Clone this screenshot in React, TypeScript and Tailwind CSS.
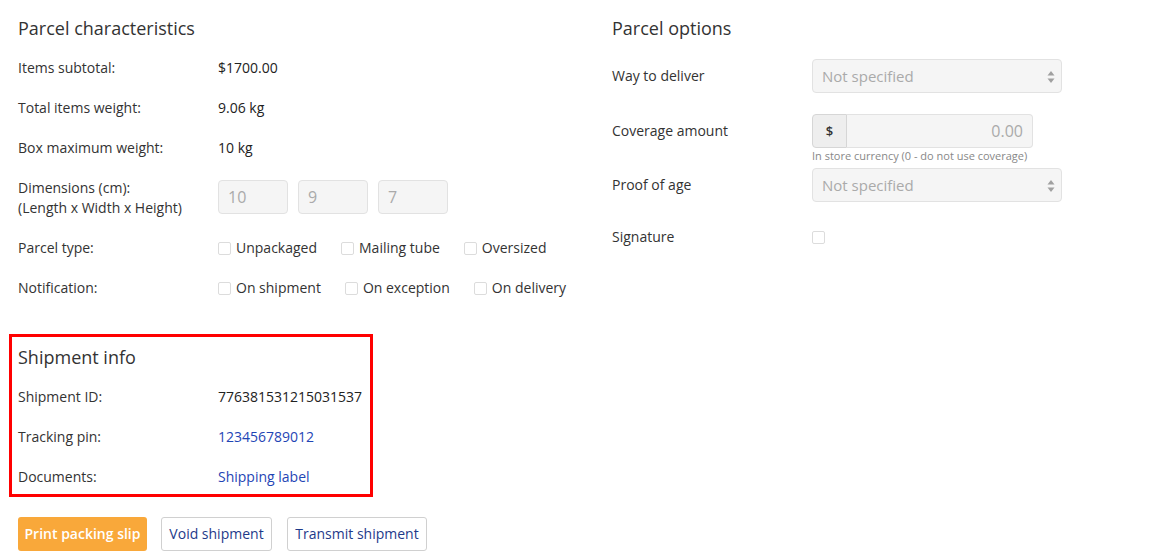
import React from "react";

const Check = ({ label }: { label?: string }) => (
  <label className="flex items-center gap-[5px] whitespace-nowrap">
    <span className="inline-block w-[13px] h-[13px] border border-[#dcdcdc] rounded-[2px] bg-white" />
    {label && <span>{label}</span>}
  </label>
);

const Row = ({ label, children }: { label: string; children: React.ReactNode }) => (
  <div className="flex items-center h-10">
    <div className="w-[200px] shrink-0">{label}</div>
    <div className="text-[#222]">{children}</div>
  </div>
);

const Select = () => (
  <div className="relative w-[250px] h-[34px] bg-[#f5f5f5] border border-[#e2e2e2] rounded-[4px] flex items-center pl-[9px] text-[15px] text-[#aaa]">
    Not specified
    <svg className="absolute right-[6px] top-[11px]" width="8" height="12" viewBox="0 0 8 12">
      <path d="M4 0 L7.5 4.5 H0.5 Z" fill="#a0a0a0" />
      <path d="M4 12 L7.5 7.5 H0.5 Z" fill="#a0a0a0" />
    </svg>
  </div>
);

export default function App() {
  return (
    <div
      className="w-[1150px] h-[557px] bg-white text-[#333] text-[14px] leading-5 overflow-hidden"
      style={{ fontFamily: '"Open Sans", "Liberation Sans", sans-serif' }}
    >
      <div className="flex px-[18px]">
        <div className="w-[594px] shrink-0">
          <h2 className="text-[18px] leading-6 mt-4 mb-2 text-[#333]">Parcel characteristics</h2>
          <Row label="Items subtotal:">$1700.00</Row>
          <Row label="Total items weight:">9.06 kg</Row>
          <Row label="Box maximum weight:">10 kg</Row>
          <div className="flex items-center h-[60px]">
            <div className="w-[200px] shrink-0 leading-5">
              Dimensions (cm):
              <br />
              (Length x Width x Height)
            </div>
            <div className="flex gap-[10px] mt-[-2px]">
              {["10", "9", "7"].map((v) => (
                <div
                  key={v}
                  className="w-[70px] h-[34px] bg-[#f5f5f5] border border-[#e2e2e2] rounded-[4px] flex items-center pl-[9px] text-[16px] text-[#aaa]"
                >
                  {v}
                </div>
              ))}
            </div>
          </div>
          <div className="flex items-center h-10">
            <div className="w-[200px] shrink-0">Parcel type:</div>
            <div className="flex gap-6">
              <Check label="Unpackaged" />
              <Check label="Mailing tube" />
              <Check label="Oversized" />
            </div>
          </div>
          <div className="flex items-center h-10">
            <div className="w-[200px] shrink-0">Notification:</div>
            <div className="flex gap-6">
              <Check label="On shipment" />
              <Check label="On exception" />
              <Check label="On delivery" />
            </div>
          </div>

          <div className="mt-[26px] ml-[-9px] w-[364px] h-[163px] border-[3px] border-[#ff0000] pl-[6px] pt-[8px]">
            <h2 className="text-[18px] leading-6 mb-2 text-[#333]">Shipment info</h2>
            <Row label="Shipment ID:">776381531215031537</Row>
            <div className="flex items-center h-10">
              <div className="w-[200px] shrink-0">Tracking pin:</div>
              <span className="text-[#1f45b5]">123456789012</span>
            </div>
            <div className="flex items-center h-10">
              <div className="w-[200px] shrink-0">Documents:</div>
              <span className="text-[#1f45b5]">Shipping label</span>
            </div>
          </div>

          <div className="flex mt-[20px]">
            <button className="w-[129px] h-[34px] rounded-[3px] bg-[#f9a83a] text-white font-semibold flex items-center justify-center">
              Print packing slip
            </button>
            <button className="ml-[14px] w-[111px] h-[34px] rounded-[3px] border border-[#d0d0d0] bg-white text-[#1e3a8a] flex items-center justify-center">
              Void shipment
            </button>
            <button className="ml-[15px] w-[140px] h-[34px] rounded-[3px] border border-[#d0d0d0] bg-white text-[#1e3a8a] flex items-center justify-center">
              Transmit shipment
            </button>
          </div>
        </div>

        <div className="flex-1">
          <h2 className="text-[18px] leading-6 mt-4 text-[#333]">Parcel options</h2>
          <div className="flex items-center h-[34px] mt-[19px]">
            <div className="w-[200px] shrink-0">Way to deliver</div>
            <Select />
          </div>
          <div className="flex items-center h-[34px] mt-[21px]">
            <div className="w-[200px] shrink-0">Coverage amount</div>
            <div className="flex w-[221px] h-[34px]">
              <div className="w-[35px] h-full bg-[#eeeeee] border border-[#d6d6d6] rounded-l-[4px] flex items-center justify-center text-[13px] font-semibold text-[#333]">
                $
              </div>
              <div className="flex-1 h-full bg-[#f5f5f5] border border-l-0 border-[#e2e2e2] rounded-r-[4px] flex items-center justify-end pr-[9px] text-[16px] text-[#aaa]">
                0.00
              </div>
            </div>
          </div>
          <div className="pl-[200px] text-[11px] leading-4 text-[#888]">In store currency (0 - do not use coverage)</div>
          <div className="flex items-center h-[34px] mt-[4px]">
            <div className="w-[200px] shrink-0">Proof of age</div>
            <Select />
          </div>
          <div className="flex items-center h-[14px] mt-[28px]">
            <div className="w-[200px] shrink-0">Signature</div>
            <Check />
          </div>
        </div>
      </div>
    </div>
  );
}
